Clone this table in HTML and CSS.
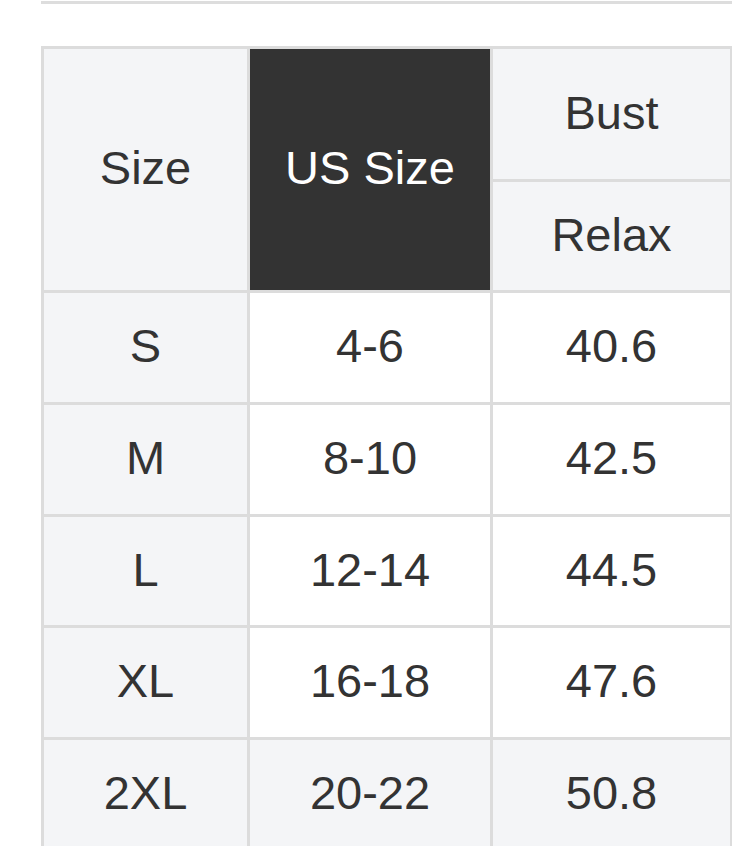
FILE: index.html
```html
<!DOCTYPE html>
<html lang="en">
<head>
<meta charset="utf-8">
<title>Size chart</title>
<link rel="stylesheet" href="styles.css">
</head>
<body>
<div class="rule"></div>
<div class="chart">
  <div class="cell head size-head">Size</div>
  <div class="cell dark us-head">US Size</div>
  <div class="cell head">Bust</div>
  <div class="cell head">Relax</div>

  <div class="cell head">S</div>
  <div class="cell">4-6</div>
  <div class="cell">40.6</div>

  <div class="cell head">M</div>
  <div class="cell">8-10</div>
  <div class="cell">42.5</div>

  <div class="cell head">L</div>
  <div class="cell">12-14</div>
  <div class="cell">44.5</div>

  <div class="cell head">XL</div>
  <div class="cell">16-18</div>
  <div class="cell">47.6</div>

  <div class="cell head">2XL</div>
  <div class="cell alt">20-22</div>
  <div class="cell alt">50.8</div>
</div>
</body>
</html>
```

FILE: styles.css
```css
html, body {
  margin: 0;
  padding: 0;
  overflow: hidden;
  background: #ffffff;
}

body {
  font-family: "Liberation Sans", Arial, sans-serif;
  color: #333333;
  padding-top: 1px;
}

.rule {
  height: 2.5px;
  margin-left: 41px;
  background: #dddddd;
}

.chart {
  display: grid;
  grid-template-columns: 203px 240px 237px;
  grid-template-rows: 130px 108px 109px 109px 108px 109px 109px;
  gap: 3px;
  padding: 3px;
  width: max-content;
  margin-top: 42.5px;
  margin-left: 41px;
  background: #dcdcdc;
}

.cell {
  display: flex;
  align-items: center;
  justify-content: center;
  padding-bottom: 3px;
  background: #ffffff;
  font-size: 47px;
  line-height: 1.149;
  color: #333333;
}

.head {
  background: #f4f5f7;
}

.alt {
  background: #f4f5f7;
}

.size-head {
  grid-row: 1 / span 2;
}

.us-head {
  grid-row: 1 / span 2;
}

.dark {
  background: #333333;
  color: #ffffff;
}
```
